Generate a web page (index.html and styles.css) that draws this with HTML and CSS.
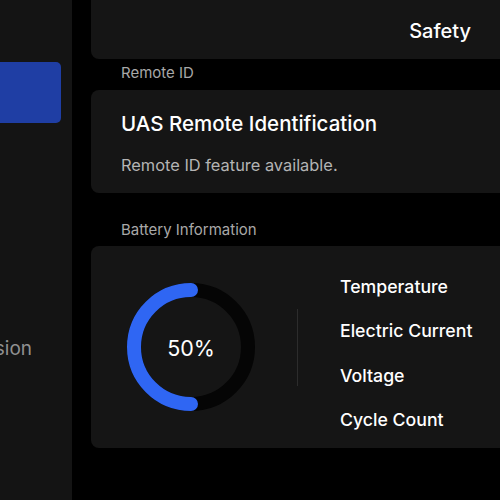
FILE: index.html
```html
<!DOCTYPE html>
<html>
<head>
<meta charset="utf-8">
<link rel="stylesheet" href="styles.css">
</head>
<body>
<div class="app">
  <aside class="sidebar">
    <div class="nav-active"></div>
    <div class="nav-item"><span>Version</span></div>
  </aside>
  <main class="main">
    <section class="card card-top">
      <span class="top-title">Safety</span>
    </section>
    <div class="label label-remote">Remote ID</div>
    <section class="card card-remote">
      <div class="remote-title">UAS Remote Identification</div>
      <div class="remote-sub">Remote ID feature available.</div>
    </section>
    <div class="label label-battery">Battery Information</div>
    <section class="card card-battery">
      <div class="ring">
        <svg width="140" height="140" viewBox="0 0 140 140">
          <circle cx="70" cy="70" r="57" fill="none" stroke="#050505" stroke-width="14"/>
          <path d="M70 13 A57 57 0 0 0 70 127" fill="none" stroke="#2f66f3" stroke-width="14" stroke-linecap="round"/>
        </svg>
        <span class="ring-value">50%</span>
      </div>
      <div class="divider"></div>
      <ul class="stats">
        <li>Temperature</li>
        <li>Electric Current</li>
        <li>Voltage</li>
        <li>Cycle Count</li>
      </ul>
    </section>
  </main>
</div>
</body>
</html>
```
FILE: styles.css
```css
html, body {
  margin: 0;
  padding: 0;
  background: #000;
}
body {
  width: 500px;
  height: 500px;
  overflow: hidden;
  font-family: Inter, "Noto Sans", "Liberation Sans", sans-serif;
  color: #fff;
}
.app {
  display: flex;
  height: 500px;
}
.sidebar {
  width: 72px;
  flex: none;
  background: #141414;
  padding-top: 62px;
  box-sizing: border-box;
}
.nav-active {
  width: 61px;
  height: 61px;
  background: #1f3ea4;
  border-radius: 0 5px 5px 0;
}
.nav-item {
  width: 32px;
  display: flex;
  justify-content: flex-end;
  margin-top: 214px;
  white-space: nowrap;
  font-size: 19px;
  line-height: 24px;
  color: #909090;
}
.main {
  margin-left: 19px;
  width: 430px;
  flex: none;
  display: flex;
  flex-direction: column;
}
.card {
  background: #151515;
  border-radius: 8px;
}
.card-top {
  height: 59px;
  border-radius: 0 0 8px 8px;
  display: flex;
  align-items: center;
  justify-content: flex-end;
  padding-right: 50px;
  padding-top: 3px;
  box-sizing: border-box;
}
.top-title {
  font-size: 20px;
  font-weight: 500;
}
.label {
  padding-left: 30px;
  font-size: 15px;
  line-height: 20px;
  color: #a8a8a8;
}
.label-remote {
  padding-top: 4px;
  height: 31px;
  box-sizing: border-box;
}
.card-remote {
  height: 103px;
  padding: 22px 30px 0;
  box-sizing: border-box;
}
.remote-title {
  font-size: 20.5px;
  line-height: 24px;
  font-weight: 500;
}
.remote-sub {
  margin-top: 19px;
  font-size: 16.4px;
  line-height: 20px;
  color: #b4b4b4;
}
.label-battery {
  height: 53px;
  padding-top: 27px;
  box-sizing: border-box;
}
.card-battery {
  height: 202px;
  display: flex;
  align-items: center;
  box-sizing: border-box;
}
.ring {
  position: relative;
  width: 140px;
  height: 140px;
  margin-left: 30px;
  flex: none;
}
.ring svg {
  display: block;
}
.ring-value {
  position: absolute;
  inset: 0;
  display: flex;
  align-items: center;
  justify-content: center;
  font-size: 21.5px;
  padding-top: 1px;
}
.divider {
  width: 1px;
  height: 77px;
  background: #2c2c2c;
  margin-left: 36px;
  flex: none;
}
.stats {
  list-style: none;
  margin: 13px 0 0 42px;
  padding: 0;
  display: grid;
  grid-auto-rows: 44.4px;
  align-items: center;
}
.stats li {
  font-size: 17.7px;
  font-weight: 500;
  line-height: 22px;
}
```
